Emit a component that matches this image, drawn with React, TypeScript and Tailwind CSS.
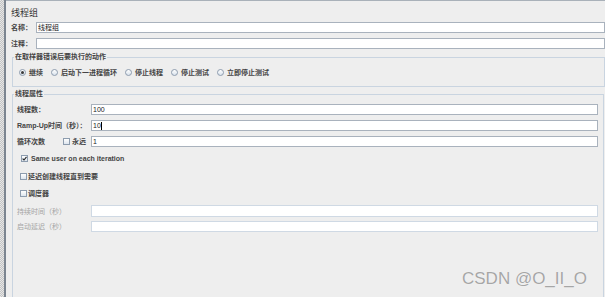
import React from "react";

const font = "font-['Liberation_Sans','Noto_Sans_CJK_SC',sans-serif]";

function Radio({ checked }: { checked?: boolean }) {
  return (
    <span className="w-[7px] h-[7px] rounded-full border border-[#8d9cae] bg-gradient-to-b from-white to-[#d9e2ec] flex items-center justify-center shrink-0">
      {checked && <span className="w-[3px] h-[3px] rounded-full bg-[#3a3a3a]" />}
    </span>
  );
}

function Check({ checked }: { checked?: boolean }) {
  return (
    <span className="w-[7px] h-[7px] border border-[#8d9cae] bg-gradient-to-b from-white to-[#dde5ee] flex items-center justify-center shrink-0">
      {checked && (
        <svg width="5" height="5" viewBox="0 0 5 5">
          <path d="M0.6 2.6 L2 4 L4.5 0.8" fill="none" stroke="#222" strokeWidth="1.1" />
        </svg>
      )}
    </span>
  );
}

function Field({ children, disabled, h = "h-[11px]" }: { children?: React.ReactNode; disabled?: boolean; h?: string }) {
  return (
    <div
      className={`flex-1 ${h} bg-white border ${disabled ? "border-[#cfd9e4]" : "border-[#a9b2bd]"} flex items-center pl-[1px] text-[7px] leading-none text-[#222] font-normal`}
    >
      {children}
    </div>
  );
}

export default function App() {
  return (
    <div className={`relative w-[605px] h-[297px] overflow-hidden bg-[#eeeeee] flex ${font}`}>
      <div className="w-[4px] h-full shrink-0 bg-[repeating-conic-gradient(#c4c4c4_0_25%,#e6e6e6_0_50%)] bg-[length:2px_2px]" />
      <div className="w-[2px] h-full shrink-0 bg-[#7c8590]" />
      <div className="flex-1 border-t border-[#a9b1b9]">
        <div className="h-[21px] flex items-center pl-[5px] pt-[3px] text-[9px] leading-none text-[#333]">线程组</div>

        <div className="h-[11px] flex items-center pl-[5px]">
          <span className="w-[25px] text-[7px] leading-none font-bold text-[#444]">名称：</span>
          <Field>线程组</Field>
        </div>
        <div className="mt-[5px] h-[11px] flex items-center pl-[5px]">
          <span className="w-[25px] text-[7px] leading-none font-bold text-[#444]">注释：</span>
          <Field />
        </div>

        <fieldset className="mt-[4px] ml-[6px] border border-[#c9d4e0] pl-[1px]">
          <legend className="px-[1px] text-[7px] leading-[8px] font-bold text-[#444]">在取样器错误后要执行的动作</legend>
          <div className="pl-[5px] pt-[7px] pb-[10px] flex items-center gap-[8px] h-[25px] text-[7px] leading-none font-bold text-[#444]">
            {[
              ["继续", true],
              ["启动下一进程循环", false],
              ["停止线程", false],
              ["停止测试", false],
              ["立即停止测试", false],
            ].map(([t, c]) => (
              <span key={t as string} className="flex items-center gap-[3px]">
                <Radio checked={c as boolean} />
                <span>{t as string}</span>
              </span>
            ))}
          </div>
        </fieldset>

        <fieldset className="mt-[3px] ml-[6px] mr-[1px] border border-[#c9d4e0] pl-[1px] pr-[1px]">
          <legend className="px-[1px] text-[7px] leading-[8px] font-bold text-[#444]">线程属性</legend>
          <div className="pl-[3px] pr-[4px] pb-[120px] text-[7px] leading-none font-bold text-[#444]">
            <div className="pt-[6px]">
              <div className="h-[11px] flex items-center">
                <span className="w-[74px]">线程数：</span>
                <Field>100</Field>
              </div>
            </div>
            <div className="mt-[5px] h-[11px] flex items-center">
              <span className="w-[74px]">Ramp-Up时间（秒）：</span>
              <Field>
                10<span className="w-[1px] h-[8px] bg-black ml-[0.5px]" />
              </Field>
            </div>
            <div className="mt-[5px] h-[11px] flex items-center">
              <span className="w-[74px] flex items-center">
                <span className="w-[46px]">循环次数</span>
                <Check />
                <span className="ml-[2px]">永远</span>
              </span>
              <Field>1</Field>
            </div>
            <div className="mt-[7px] h-[8px] flex items-center pl-[4px]">
              <Check checked />
              <span className="ml-[3px]">Same user on each iteration</span>
            </div>
            <div className="mt-[10px] h-[8px] flex items-center pl-[3px]">
              <Check />
              <span className="ml-[1px]">延迟创建线程直到需要</span>
            </div>
            <div className="mt-[9px] h-[8px] flex items-center pl-[3px]">
              <Check />
              <span className="ml-[1px]">调度器</span>
            </div>
            <div className="mt-[8px] h-[12px] flex items-center">
              <span className="w-[74px] text-[#a4a4a4] font-normal">持续时间（秒）</span>
              <Field disabled h="h-[12px]" />
            </div>
            <div className="mt-[4px] h-[11px] flex items-center">
              <span className="w-[74px] text-[#a4a4a4] font-normal">启动延迟（秒）</span>
              <Field disabled />
            </div>
          </div>
        </fieldset>
      </div>

      <div className="absolute left-[462px] top-[270px] text-[17px] leading-none text-[#a6a6a6] font-['Liberation_Sans',sans-serif] [text-shadow:0_0_1px_#ffffff]">
        CSDN @O_II_O
      </div>
    </div>
  );
}
